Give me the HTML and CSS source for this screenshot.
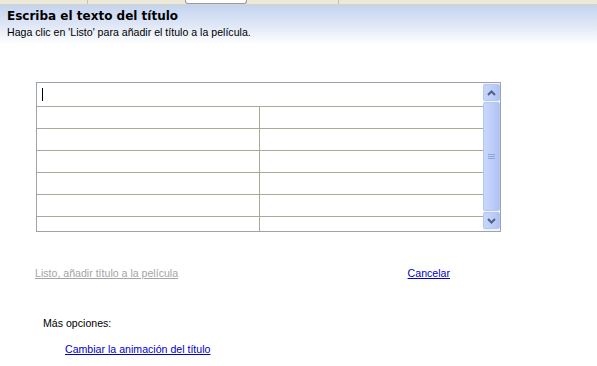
FILE: index.html
```html
<!DOCTYPE html>
<html lang="es">
  <head>
    <meta charset="UTF-8" />
    <title>Escriba el texto del título</title>
    <link rel="stylesheet" href="styles.css">
  </head>
  <body>
    <div class="top-strip">
      <span class="strip-part"></span>
      <span class="strip-box"></span>
      <span class="strip-part last"></span>
    </div>
    <div class="header">
      <h1>Escriba el texto del título</h1>
      <p class="hint">Haga clic en 'Listo' para añadir el título a la película.</p>
    </div>

    <div class="title-box">
      <div class="cells">
        <div class="entry"><span class="caret"></span></div>
        <div class="row"><div class="cell"></div><div class="cell"></div></div>
        <div class="row"><div class="cell"></div><div class="cell"></div></div>
        <div class="row"><div class="cell"></div><div class="cell"></div></div>
        <div class="row"><div class="cell"></div><div class="cell"></div></div>
        <div class="row"><div class="cell"></div><div class="cell"></div></div>
        <div class="row"><div class="cell"></div><div class="cell"></div></div>
      </div>
      <div class="scrollbar">
        <div class="scroll-btn">
          <svg width="9" height="6" viewBox="0 0 9 6"><path d="M1 5 L4.5 1.5 L8 5" fill="none" stroke="#4d6185" stroke-width="2"/></svg>
        </div>
        <div class="thumb">
          <svg width="7" height="6" viewBox="0 0 7 6"><path d="M0 0.5H7M0 2.5H7M0 4.5H7" stroke="#8ea6de" stroke-width="1"/></svg>
        </div>
        <div class="scroll-btn">
          <svg width="9" height="6" viewBox="0 0 9 6"><path d="M1 1 L4.5 4.5 L8 1" fill="none" stroke="#4d6185" stroke-width="2"/></svg>
        </div>
      </div>
    </div>

    <div class="actions">
      <a class="done" href="#">Listo, añadir título a la película</a>
      <a href="#">Cancelar</a>
    </div>

    <div class="more">
      <p>Más opciones:</p>
      <a href="#">Cambiar la animación del título</a>
    </div>
  </body>
</html>
```

FILE: styles.css
```css
body {
  margin: 0;
  background-color: #fff;
  font-family: "Liberation Sans", Arial, sans-serif;
  font-size: 10.6px;
  color: #000;
}

a {
  color: #0000cc;
}

.top-strip {
  display: flex;
  height: 4px;
  background-color: #ece9d8;
  border-bottom: 1px solid #d8d4c4;
}

.strip-part {
  width: 87px;
  border-right: 1px solid #c8c4b4;
}

.strip-part.last {
  width: 91px;
}

.strip-box {
  width: 62px;
  margin-left: 97px;
  border: 1px solid #9a9a9a;
  border-top: none;
  border-radius: 0 0 3px 3px;
  background-color: #fff;
  box-sizing: border-box;
}

.header {
  height: 37px;
  padding: 3px 7px 0;
  background: linear-gradient(#c4d3ef, #dfe7f6 50%, #fff);
}

h1 {
  margin: 0;
  font-family: "DejaVu Sans", Verdana, sans-serif;
  font-size: 12px;
  font-weight: bold;
  line-height: 16px;
}

.hint {
  margin: 0;
  line-height: 16px;
}

.title-box {
  display: flex;
  width: 463px;
  height: 148px;
  margin: 37px 0 0 36px;
  border: 1px solid #9ba3ae;
}

.cells {
  flex: 1;
  overflow: hidden;
}

.entry {
  height: 23px;
  padding: 5px 0 0 5px;
  box-sizing: border-box;
}

.caret {
  display: block;
  width: 1px;
  height: 13px;
  background-color: #000;
}

.row {
  display: grid;
  grid-template-columns: 223px 1fr;
  height: 21px;
  border-top: 1px solid #aca899;
}

.cell:first-child {
  border-right: 1px solid #aca899;
}

.scrollbar {
  display: flex;
  flex-direction: column;
  gap: 1px;
  width: 17px;
  padding: 1px 0 2px;
  background-color: #f3f4fa;
}

.scroll-btn,
.thumb {
  display: flex;
  align-items: center;
  justify-content: center;
  border: 1px solid #b7c8f0;
  border-radius: 2px;
  background: linear-gradient(90deg, #c8d6fb, #bccdf8 60%, #aec1f3);
}

.scroll-btn {
  height: 15px;
}

.thumb {
  flex: 1;
}

.actions {
  display: flex;
  justify-content: space-between;
  width: 415px;
  margin: 35px 0 0 35px;
}

.actions .done {
  color: #a4a4a4;
}

.more {
  margin: 38px 0 0 43px;
}

.more p {
  margin: 0;
}

.more a {
  display: inline-block;
  margin: 14px 0 0 22px;
}
```
